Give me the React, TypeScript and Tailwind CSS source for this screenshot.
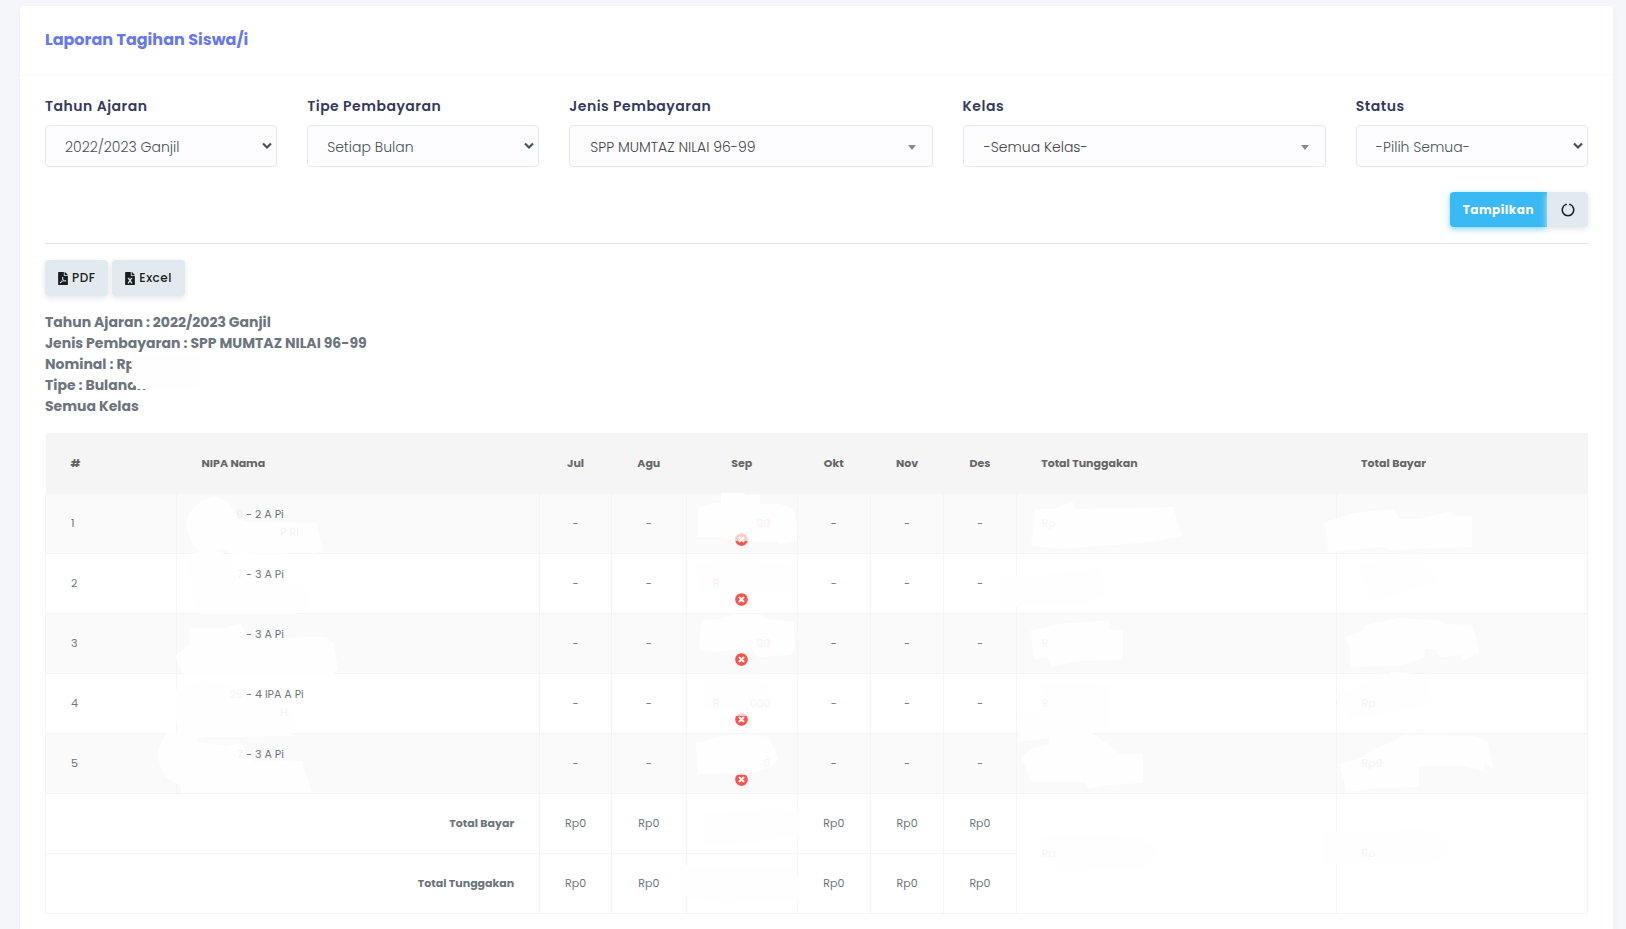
import type { ReactNode } from 'react';
import { FaFileExcel, FaFilePdf, FaTimesCircle } from 'react-icons/fa';

type Row = {
  no: number;
  trace: string;
  traceClass: string;
  kelas: string;
  name: string;
  sepStart: string;
  sepEnd: string;
  fade: string;
  tunggakan: string;
  bayar: string;
};

const rows: Row[] = [
  { no: 1, trace: '9', traceClass: 'text-[#eceef0]', kelas: '- 2 A Pi', name: 'P RI', sepStart: '', sepEnd: '00', fade: 'h-[8px]', tunggakan: 'Rp', bayar: '' },
  { no: 2, trace: '7', traceClass: 'text-[#f2f3f5]', kelas: '- 3 A Pi', name: '', sepStart: 'R', sepEnd: '', fade: 'h-0', tunggakan: '', bayar: '' },
  { no: 3, trace: '', traceClass: 'text-[#f4f4f4]', kelas: '- 3 A Pi', name: '', sepStart: '', sepEnd: '00', fade: 'h-0', tunggakan: 'R', bayar: '' },
  { no: 4, trace: '25', traceClass: 'text-[#f6f6f7]', kelas: '- 4 IPA A Pi', name: 'H', sepStart: 'R', sepEnd: '000', fade: 'h-[3px]', tunggakan: 'R', bayar: 'Rp' },
  { no: 5, trace: '7', traceClass: 'text-[#f0f1f3]', kelas: '- 3 A Pi', name: '', sepStart: '', sepEnd: '0', fade: 'h-[2px]', tunggakan: '', bayar: 'Rp0' },
];

const strokes = [
  '186,527 189,513 200,502 215,496 228,502 235,512 240,519 248,522 316,523 323,551 313,553 232,554 222,549 203,554 193,545',
  '190,628 225,628 240,623 247,635 251,640 301,637 325,637 334,643 338,670 332,674 183,674 175,656 189,645',
  '166,733 196,733 197,742 225,746 242,743 247,755 254,761 302,761 312,793 181,793 180,785 166,778 159,763 158,750',
  '698,507 714,503 721,503 721,493 744,493 746,495 760,495 760,504 780,504 792,508 795,515 797,540 780,544 778,542 735,541 722,537 698,537',
  '701,620 720,619 735,614 760,614 768,619 794,622 795,650 790,655 758,657 752,649 730,650 718,652 699,650',
  '696,743 722,736 750,734 768,737 775,750 778,760 770,768 755,772 740,775 733,773 698,774',
  '1035,509 1052,509 1073,502 1075,509 1173,507 1182,536 1152,542 1060,549 1031,546',
  '1325,522 1355,513 1394,509 1400,519 1419,519 1451,511 1453,516 1472,516 1472,547 1391,550 1383,547 1328,552',
  '1030,631 1060,624 1109,620 1109,630 1123,630 1123,660 1080,661 1051,667 1047,657 1034,660',
  '1345,638 1362,631 1365,625 1399,618 1439,620 1446,624 1473,625 1479,653 1463,661 1461,655 1440,657 1435,649 1425,649 1424,658 1399,666 1351,667 1350,648',
  '1021,758 1032,748 1049,745 1049,733 1093,733 1120,754 1143,754 1143,783 1108,785 1088,789 1085,782 1032,782',
  '1339,764 1359,759 1371,750 1393,742 1403,735 1475,736 1488,742 1493,769 1485,763 1483,771 1463,766 1419,766 1419,787 1379,788 1347,792',
  '187,556 200,551 222,552 236,565 243,577 250,582 275,580 305,585 312,605 295,614 200,614 190,590',
  '174,690 186,685 205,680 250,692 262,702 290,705 296,730 290,736 225,737 190,737 174,720',
  '694,566 715,560 750,560 790,565 790,593 700,592',
  '704,680 750,677 771,685 771,710 704,708',
  '1002,577 1048,575 1100,567 1108,595 1080,605 1002,607',
  '1355,565 1417,556 1438,580 1372,602',
  '1041,682 1109,685 1109,727 1090,733 1018,742 1020,713 1040,712',
  '1335,695 1393,672 1425,675 1433,700 1420,707 1348,720',
  '1036,838 1061,835 1140,837 1160,850 1145,868 1060,872',
  '1324,833 1420,830 1440,833 1452,850 1430,865 1324,863',
  '703,815 775,808 800,812 800,835 760,842 703,845',
  '680,866 795,868 800,888 800,900 720,903 680,895',
];

const labelClass = 'mb-2 block text-[14px] leading-[21px] font-semibold tracking-[0.5px] text-[#34395e]';
const cell = 'h-[60px] border border-[#f5f5f5] px-[25px]';
const monthCell = 'h-[60px] border border-[#f5f5f5] text-center';

function Field({ id, label, value, span, searchable }: { id: string; label: string; value: string; span: string; searchable?: boolean }) {
  return (
    <div className={span}>
      <label htmlFor={id} className={labelClass}>{label}</label>
      <div className="relative">
        <select
          id={id}
          className={`h-[42px] w-full appearance-none rounded-[4px] border border-[#e4e6fc] bg-[#fdfdff] pt-[2px] pr-8 text-[14px] font-light ${searchable ? 'pl-5 text-[#444]' : 'pl-[19px] text-[#495057]'}`}
        >
          <option>{value}</option>
        </select>
        {searchable ? (
          <svg className="pointer-events-none absolute top-[20px] right-[17px] h-[5px] w-2" viewBox="0 0 8 5">
            <path d="M0 0h8L4 5z" fill="#888" />
          </svg>
        ) : (
          <svg className="pointer-events-none absolute top-[17px] right-[5px] h-[8px] w-[10px]" viewBox="0 0 10 8">
            <path d="M1 1.5l4 4 4-4" fill="none" stroke="#495057" strokeWidth="2.2" />
          </svg>
        )}
      </div>
    </div>
  );
}

function ExportButton({ children }: { children: ReactNode }) {
  return (
    <button className="flex h-9 items-center gap-1 rounded-[4px] bg-[#e3eaef] px-[13px] text-[12px] font-medium tracking-[0.5px] text-[#191d21] shadow-[0_2px_6px_#e1e5e8]">
      {children}
    </button>
  );
}

function Totals({ label, children }: { label: string; children?: ReactNode }) {
  return (
    <tr>
      <th scope="row" colSpan={2} className={`${cell} text-right font-bold`}>{label}</th>
      <td className={monthCell}>Rp0</td>
      <td className={monthCell}>Rp0</td>
      <td className={monthCell}></td>
      <td className={monthCell}>Rp0</td>
      <td className={monthCell}>Rp0</td>
      <td className={monthCell}>Rp0</td>
      {children}
    </tr>
  );
}

export default function App() {
  return (
    <div className="flex h-screen flex-col overflow-hidden bg-[#f4f6f9] pt-[6px] pr-[13px] pl-5 font-['Poppins','Inter',sans-serif] text-[#6c757d]">
      <main className="flex-1 rounded-t-[3px] bg-white shadow-[0_4px_8px_rgba(0,0,0,0.03)]">
        <header className="flex h-[70px] items-center border-b border-[#f9f9f9] px-[25px] pb-[2px]">
          <h1 className="text-[16px] leading-7 font-bold text-[#6777ef]">Laporan Tagihan Siswa/i</h1>
        </header>

        <div className="px-[25px] pt-5">
          <form className="grid grid-cols-12 gap-x-[30px]" onSubmit={(e) => e.preventDefault()}>
            <Field id="tahun" label="Tahun Ajaran" value="2022/2023 Ganjil" span="col-span-2" />
            <Field id="tipe" label="Tipe Pembayaran" value="Setiap Bulan" span="col-span-2" />
            <Field id="jenis" label="Jenis Pembayaran" value="SPP MUMTAZ NILAI 96-99" span="col-span-3" searchable />
            <Field id="kelas" label="Kelas" value="-Semua Kelas-" span="col-span-3" searchable />
            <Field id="status" label="Status" value="-Pilih Semua-" span="col-span-2" />
            <div className="col-span-12 mt-[25px] flex justify-end">
              <button className="h-[35px] rounded-l-[4px] bg-[#3abaf4] px-[13px] text-[12px] font-bold tracking-[0.5px] text-white shadow-[0_2px_6px_#82d3f8]">Tampilkan</button>
              <button aria-label="Muat ulang" className="flex h-[35px] w-[41px] items-center justify-center rounded-r-[4px] bg-[#e3eaef] shadow-[0_2px_6px_#e1e5e8]">
                <svg className="h-[14px] w-[14px]" viewBox="0 0 14 14">
                  <path d="M4.9 1.4A5.7 5.9 0 1 0 9.1 1.4M5.1 .8V2.2M8.9 .8V2.2" fill="none" stroke="#191d21" strokeWidth="1.5" />
                </svg>
              </button>
            </div>
          </form>

          <hr className="my-4 border-t border-[#e1e3e6]" />

          <div className="flex gap-1">
            <ExportButton><FaFilePdf className="h-[13px] w-[10px]" />PDF</ExportButton>
            <ExportButton><FaFileExcel className="h-[13px] w-[10px]" />Excel</ExportButton>
          </div>

          <div className="relative mt-4 text-[14px] leading-[21px] font-bold">
            <p>Tahun Ajaran : 2022/2023 Ganjil</p>
            <p>Jenis Pembayaran : SPP MUMTAZ NILAI 96-99</p>
            <p>Nominal : Rp</p>
            <p>Tipe : Bulanan</p>
            <p>Semua Kelas</p>
            <svg className="absolute top-[32px] left-[82px] h-12 w-20" viewBox="0 0 80 48">
              <path d="M4 10L74 10L76 40L60 45L10 45L9 42L6 41L5 34Z" fill="#fefefe" />
            </svg>
          </div>

          <div className="relative mt-4 overflow-hidden">
            <table className="w-full table-fixed border-collapse text-[11px]">
              <colgroup>
                <col className="w-[8.5%]" />
                <col className="w-[23.55%]" />
                <col className="w-[4.65%]" />
                <col className="w-[4.85%]" />
                <col className="w-[7.2%]" />
                <col className="w-[4.75%]" />
                <col className="w-[4.75%]" />
                <col className="w-[4.7%]" />
                <col className="w-[20.75%]" />
                <col className="w-[16.3%]" />
              </colgroup>
              <thead className="bg-[#f5f5f5] text-[#666]">
                <tr>
                  <th className="h-[60px] px-[25px] text-left font-bold">#</th>
                  <th className="px-[25px] text-left font-bold">NIPA Nama</th>
                  <th className="font-bold">Jul</th>
                  <th className="font-bold">Agu</th>
                  <th className="font-bold">Sep</th>
                  <th className="font-bold">Okt</th>
                  <th className="font-bold">Nov</th>
                  <th className="font-bold">Des</th>
                  <th className="px-[25px] text-left font-bold">Total Tunggakan</th>
                  <th className="px-[25px] text-left font-bold">Total Bayar</th>
                </tr>
              </thead>
              <tbody>
                {rows.map((r) => (
                  <tr key={r.no} className="odd:bg-[#fafafa]">
                    <td className={cell}>{r.no}</td>
                    <td className={cell}>
                      <div className="relative z-10 h-9 leading-[18px]">
                        <div className="flex">
                          <span className={`w-11 pr-[3px] text-right ${r.traceClass}`}>{r.trace}</span>
                          <span>{r.kelas}</span>
                        </div>
                        <p className="pl-[78px] text-[#f2f4f7]">{r.name}</p>
                      </div>
                    </td>
                    <td className={monthCell}>-</td>
                    <td className={monthCell}>-</td>
                    <td className={monthCell}>
                      <div className="relative z-10 flex h-[54px] flex-col items-center justify-end gap-[2px] pb-1 leading-[16px] text-[#fdf1f0]">
                        <span className="flex h-4 w-[58px] justify-between">
                          <span>{r.sepStart}</span>
                          <span>{r.sepEnd}</span>
                        </span>
                        <span className="relative">
                          <FaTimesCircle className="h-[13px] w-[13px] text-[#fc544b]" />
                          <span className={`absolute inset-x-0 top-0 bg-white/70 ${r.fade}`} />
                        </span>
                      </div>
                    </td>
                    <td className={monthCell}>-</td>
                    <td className={monthCell}>-</td>
                    <td className={monthCell}>-</td>
                    <td className={cell}><span className="relative z-10 text-[#f7f7f7]">{r.tunggakan}</span></td>
                    <td className={cell}><span className="relative z-10 text-[#f5f5f5]">{r.bayar}</span></td>
                  </tr>
                ))}
              </tbody>
              <tfoot>
                <Totals label="Total Bayar">
                  <td rowSpan={2} className={cell}><span className="relative z-10 text-[#f7f7f7]">Rp</span></td>
                  <td rowSpan={2} className={cell}><span className="relative z-10 text-[#f9f5f3]">Rp</span></td>
                </Totals>
                <Totals label="Total Tunggakan" />
              </tfoot>
            </table>
            <svg className="pointer-events-none absolute top-0 left-0 h-[481px] w-full" viewBox="45 433 1543 481" preserveAspectRatio="none">
              {strokes.map((points, i) => (
                <polygon key={i} points={points} fill="#fefefe" />
              ))}
            </svg>
          </div>
        </div>
      </main>
    </div>
  );
}
